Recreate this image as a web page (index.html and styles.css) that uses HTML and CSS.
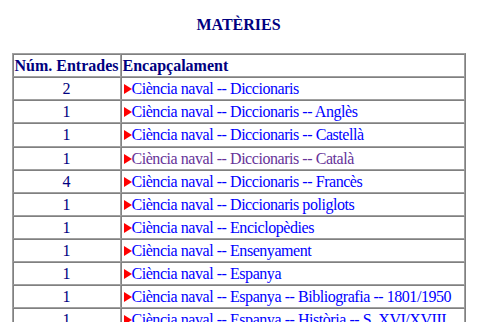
FILE: index.html
```html
<!DOCTYPE html>
<html lang="ca">
<head>
<meta charset="utf-8">
<title>Matèries</title>
<link rel="stylesheet" href="styles.css">
</head>
<body>
<div class="page">
  <h1 class="title">MATÈRIES</h1>
  <table class="list">
    <colgroup><col class="c-num"><col class="c-head"></colgroup>
    <thead>
      <tr><th class="num-h">Núm. Entrades</th><th class="head-h">Encapçalament</th></tr>
    </thead>
    <tbody>
      <tr><td class="num">2</td><td class="head"><span class="arrow"></span><a href="#">Ciència naval -- Diccionaris</a></td></tr>
      <tr><td class="num">1</td><td class="head"><span class="arrow"></span><a href="#">Ciència naval -- Diccionaris -- Anglès</a></td></tr>
      <tr><td class="num">1</td><td class="head"><span class="arrow"></span><a href="#">Ciència naval -- Diccionaris -- Castellà</a></td></tr>
      <tr><td class="num">1</td><td class="head"><span class="arrow"></span><a class="visited" href="#">Ciència naval -- Diccionaris -- Català</a></td></tr>
      <tr><td class="num">4</td><td class="head"><span class="arrow"></span><a href="#">Ciència naval -- Diccionaris -- Francès</a></td></tr>
      <tr><td class="num">1</td><td class="head"><span class="arrow"></span><a href="#">Ciència naval -- Diccionaris poliglots</a></td></tr>
      <tr><td class="num">1</td><td class="head"><span class="arrow"></span><a href="#">Ciència naval -- Enciclopèdies</a></td></tr>
      <tr><td class="num">1</td><td class="head"><span class="arrow"></span><a href="#">Ciència naval -- Ensenyament</a></td></tr>
      <tr><td class="num">1</td><td class="head"><span class="arrow"></span><a href="#">Ciència naval -- Espanya</a></td></tr>
      <tr><td class="num">1</td><td class="head"><span class="arrow"></span><a href="#">Ciència naval -- Espanya -- Bibliografia -- 1801/1950</a></td></tr>
      <tr><td class="num">1</td><td class="head"><span class="arrow"></span><a href="#">Ciència naval -- Espanya -- Història -- S. XVI/XVIII</a></td></tr>
    </tbody>
  </table>
</div>
</body>
</html>
```
FILE: styles.css
```css
html, body {
  margin: 0;
  padding: 0;
  background: #ffffff;
}
body {
  font-family: "Liberation Serif", "Times New Roman", serif;
  font-size: 16px;
  color: #000080;
  overflow: hidden;
}
.page {
  width: 477px;
  padding-top: 15px;
}
.title {
  margin: 0 0 19px 0;
  font-size: 16px;
  font-weight: bold;
  line-height: 19px;
  text-align: center;
  color: #000080;
}
.list {
  width: 454px;
  margin: 0 auto;
  table-layout: fixed;
  border-collapse: separate;
  border-spacing: 0;
  border-style: solid;
  border-width: 1px;
  border-color: #a0a0a0 #808080 #808080 #a0a0a0;
}
.c-num { width: 108px; }
.list th, .list td {
  border-style: solid;
  border-width: 1px;
  border-color: #808080 #a0a0a0 #a0a0a0 #808080;
  padding: 1px;
  line-height: 19.13px;
  white-space: nowrap;
  overflow: hidden;
}
.list th {
  font-weight: bold;
  text-align: left;
  color: #000080;
}
.num {
  text-align: center;
  color: #000080;
}
.head a {
  color: #0000ff;
  text-decoration: none;
  letter-spacing: -0.45px;
}
.head a.visited {
  color: #663399;
}
.arrow {
  display: inline-block;
  width: 0;
  height: 0;
  border-style: solid;
  border-width: 5px 0 5px 8px;
  border-color: transparent transparent transparent #ff0000;
  margin-left: 1px;
  margin-right: 0;
  vertical-align: 0;
}
```
